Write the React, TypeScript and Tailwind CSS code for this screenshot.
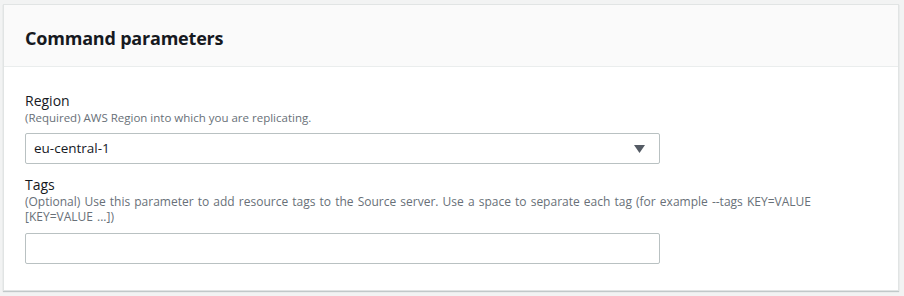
import React from 'react';

export default function App() {
  return (
    <div className="w-[904px] h-[296px] bg-[#f2f3f3] pt-[4px] pl-[3px] pr-[5px] font-['Open_Sans',sans-serif] text-[#16191f]">
      <div className="bg-white border border-[#e1e4e4] shadow-[0_1px_1px_rgba(0,28,36,0.2)] h-[287px]">
        {/* Header */}
        <div className="h-[62px] bg-[#fafafa] border-b border-[#eaeded] flex items-center px-[21px] pt-[5px]">
          <h2 className="text-[18px] font-bold tracking-[-0.2px]">Command parameters</h2>
        </div>

        {/* Body */}
        <div className="px-[21px] pt-[25px]">
          <div>
            <div className="text-[14px] leading-[18px]">Region</div>
            <div className="text-[11.5px] leading-[16px] text-[#687078]">(Required) AWS Region into which you are replicating.</div>
            <div className="mt-[7px] w-[635px] h-[31px] border border-[#b9c1c2] rounded-[2px] flex items-center justify-between pl-[8px] pr-[14px]">
              <span className="text-[13.5px]">eu-central-1</span>
              <svg width="11" height="8" viewBox="0 0 11 8">
                <path d="M0 0 L11 0 L5.5 8 Z" fill="#545b64" />
              </svg>
            </div>
          </div>

          <div className="mt-[12px]">
            <div className="text-[14px] leading-[18px]">Tags</div>
            <div className="text-[12px] leading-[15px] text-[#687078] pr-[60px] [word-spacing:1px]">
              (Optional) Use this parameter to add resource tags to the Source server. Use a space to separate each tag (for example --tags KEY=VALUE [KEY=VALUE ...])
            </div>
            <div className="mt-[9px] w-[635px] h-[31px] border border-[#b9c1c2] rounded-[2px]" />
          </div>
        </div>
      </div>
    </div>
  );
}
